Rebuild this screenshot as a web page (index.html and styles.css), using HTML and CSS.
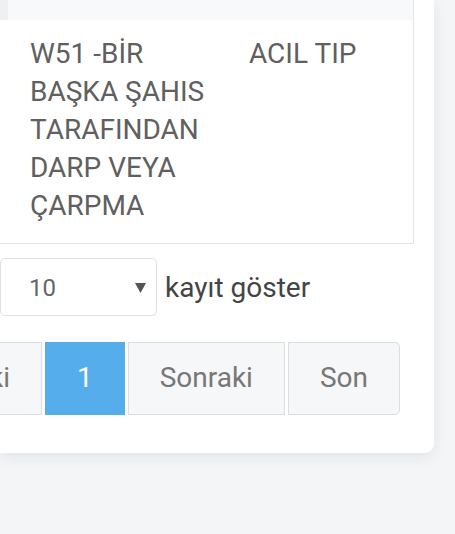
FILE: index.html
```html
<!DOCTYPE html>
<html lang="tr">
<head>
<meta charset="utf-8">
<title>Liste</title>
<link rel="stylesheet" href="styles.css">
</head>
<body>
<div class="card">
  <table class="tbl">
    <colgroup><col class="c1"><col class="c2"></colgroup>
    <thead>
      <tr><th class="h1"></th><th class="h2"></th></tr>
    </thead>
    <tbody>
      <tr>
        <td class="d1">W51 -BİR BAŞKA ŞAHIS TARAFINDAN DARP VEYA ÇARPMA</td>
        <td class="d2">ACIL TIP</td>
      </tr>
    </tbody>
  </table>

  <div class="length">
    <div class="select">
      <span class="sel-val">10</span>
      <svg class="sel-arrow" width="11" height="10" viewBox="0 0 11 10"><polygon points="0,0 11,0 5.5,10" fill="#555"/></svg>
    </div>
    <span class="length-label">kayıt göster</span>
  </div>

  <div class="pager">
    <span class="pbtn first">Önceki</span>
    <span class="pbtn active">1</span>
    <span class="pbtn">Sonraki</span>
    <span class="pbtn last">Son</span>
  </div>
</div>
</body>
</html>
```
FILE: styles.css
```css
html, body {
  margin: 0;
  padding: 0;
}
body {
  background: #f3f5f7;
  font-family: Roboto, "Liberation Sans", Arial, sans-serif;
  width: 455px;
  height: 534px;
  overflow: hidden;
}
.card {
  width: 414px;
  background: #ffffff;
  padding: 0 20px 38px 0;
  border-radius: 0 0 9px 0;
  box-shadow: 0 4px 14px rgba(40, 50, 60, 0.08);
}
.tbl {
  width: 414px;
  table-layout: fixed;
  border-collapse: separate;
  border-spacing: 0;
  border-right: 1px solid #e4e5e7;
  border-bottom: 1px solid #e4e5e7;
}
.c1 { width: 219px; }
.tbl th {
  height: 20px;
  padding: 0;
  background: #f7f9fb;
}
.tbl th.h1 {
  background: linear-gradient(to right, #eef0f2 8px, #f7f9fb 8px);
}
.tbl td {
  vertical-align: top;
  font-size: 28px;
  line-height: 38px;
  color: #606060;
  padding: 15px 4px 18px 30px;
}
.length {
  display: flex;
  align-items: center;
  gap: 8px;
  margin-top: 14px;
}
.select {
  box-sizing: border-box;
  width: 157px;
  height: 58px;
  border: 1px solid #dfe0e2;
  border-radius: 5px;
  display: flex;
  align-items: center;
  justify-content: space-between;
  padding: 0 10px 0 28px;
  background: #fff;
}
.sel-val {
  font-size: 24px;
  color: #666;
  position: relative;
  top: 1px;
}
.sel-arrow {
  display: block;
  margin-top: 1px;
}
.length-label {
  font-size: 28px;
  color: #444;
}
.pager {
  display: flex;
  justify-content: flex-end;
  gap: 3px;
  margin-top: 26px;
  margin-right: 14px;
}
.pbtn {
  flex: none;
  font-size: 28px;
  line-height: 39px;
  padding: 15px 31px 17px;
  border: 1px solid #dcdddf;
  background: #f6f7f8;
  color: #777;
  white-space: nowrap;
}
.pbtn.first { border-radius: 5px 0 0 5px; }
.pbtn.last { border-radius: 0 5px 5px 0; }
.pbtn.active {
  background: #56adeb;
  border-color: #56adeb;
  color: #fff;
}
```
